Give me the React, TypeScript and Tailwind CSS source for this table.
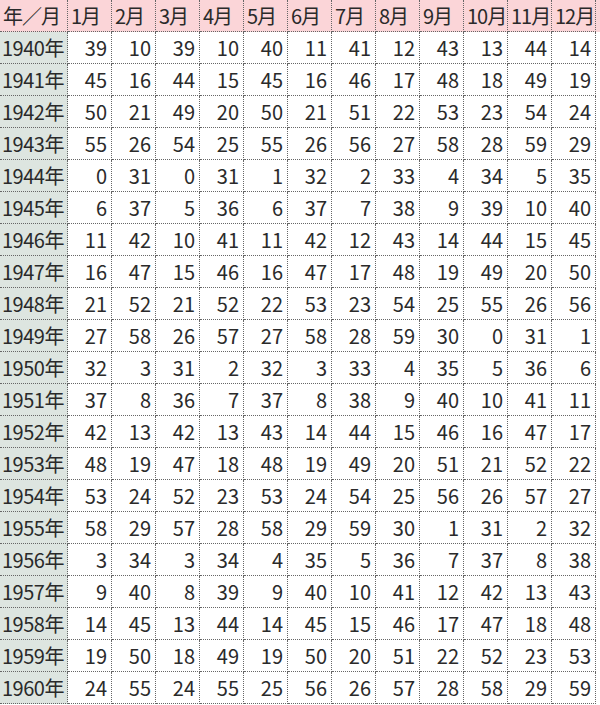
const months = ["1月", "2月", "3月", "4月", "5月", "6月", "7月", "8月", "9月", "10月", "11月", "12月"];

const rows: [string, number[]][] = [
  ["1940年", [39, 10, 39, 10, 40, 11, 41, 12, 43, 13, 44, 14]],
  ["1941年", [45, 16, 44, 15, 45, 16, 46, 17, 48, 18, 49, 19]],
  ["1942年", [50, 21, 49, 20, 50, 21, 51, 22, 53, 23, 54, 24]],
  ["1943年", [55, 26, 54, 25, 55, 26, 56, 27, 58, 28, 59, 29]],
  ["1944年", [0, 31, 0, 31, 1, 32, 2, 33, 4, 34, 5, 35]],
  ["1945年", [6, 37, 5, 36, 6, 37, 7, 38, 9, 39, 10, 40]],
  ["1946年", [11, 42, 10, 41, 11, 42, 12, 43, 14, 44, 15, 45]],
  ["1947年", [16, 47, 15, 46, 16, 47, 17, 48, 19, 49, 20, 50]],
  ["1948年", [21, 52, 21, 52, 22, 53, 23, 54, 25, 55, 26, 56]],
  ["1949年", [27, 58, 26, 57, 27, 58, 28, 59, 30, 0, 31, 1]],
  ["1950年", [32, 3, 31, 2, 32, 3, 33, 4, 35, 5, 36, 6]],
  ["1951年", [37, 8, 36, 7, 37, 8, 38, 9, 40, 10, 41, 11]],
  ["1952年", [42, 13, 42, 13, 43, 14, 44, 15, 46, 16, 47, 17]],
  ["1953年", [48, 19, 47, 18, 48, 19, 49, 20, 51, 21, 52, 22]],
  ["1954年", [53, 24, 52, 23, 53, 24, 54, 25, 56, 26, 57, 27]],
  ["1955年", [58, 29, 57, 28, 58, 29, 59, 30, 1, 31, 2, 32]],
  ["1956年", [3, 34, 3, 34, 4, 35, 5, 36, 7, 37, 8, 38]],
  ["1957年", [9, 40, 8, 39, 9, 40, 10, 41, 12, 42, 13, 43]],
  ["1958年", [14, 45, 13, 44, 14, 45, 15, 46, 17, 47, 18, 48]],
  ["1959年", [19, 50, 18, 49, 19, 50, 20, 51, 22, 52, 23, 53]],
  ["1960年", [24, 55, 24, 55, 25, 56, 26, 57, 28, 58, 29, 59]],
];

const cols = "grid grid-cols-[68px_repeat(12,44px)]";

export default function App() {
  return (
    <div
      className="w-[600px] h-[705px] bg-white overflow-hidden text-[#2a2a2a] text-[20px] leading-none"
      style={{ fontFamily: '"Noto Sans CJK JP", "DejaVu Sans", sans-serif' }}
    >
      {/* header */}
      <div className={`${cols} h-[32px] bg-[#fbd5d8]`}>
        <div className="flex items-center pl-[3px] border-r border-b border-dotted border-[#666] tracking-[-1px]">年／月</div>
        {months.map((m) => (
          <div key={m} className="flex items-center pl-[3px] border-r border-b border-dotted border-[#666] tracking-[-1px] whitespace-nowrap">
            {m}
          </div>
        ))}
      </div>

      {rows.map(([year, vals]) => (
        <div key={year} className={`${cols} h-[32px]`}>
          <div className="flex items-center pl-[2px] bg-[#dde5e0] border-r border-b border-dotted border-[#666] tracking-[-0.5px]">{year}</div>
          {vals.map((v, i) => (
            <div key={i} className="flex items-center justify-end pr-[4px] border-r border-b border-dotted border-[#666]">
              {v}
            </div>
          ))}
        </div>
      ))}
    </div>
  );
}
